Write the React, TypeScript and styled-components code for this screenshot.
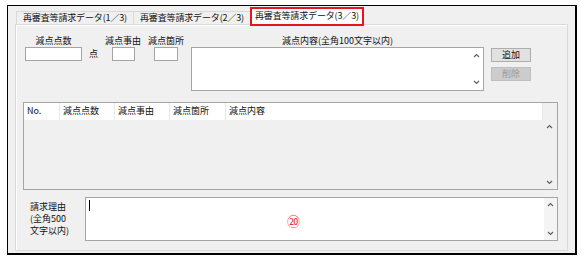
import styled, { createGlobalStyle } from "styled-components";

const GlobalStyle = createGlobalStyle`
html, body {
    margin: 0;
    background: #fff;
}
body {
    font-family: "Noto Sans CJK JP", "Noto Sans", sans-serif;
    font-size: 9px;
    color: #111;
}
`;

const Frame = styled.div`
box-sizing: border-box;
width: 570px;
height: 250px;
margin: 5px 0 0 7px;
padding: 1px 0 0 7px;
border: solid #000;
border-width: 1px 2px 2px 1px;
background: #f0f0f0;
`;

const TabStrip = styled.div`
display: flex;
align-items: flex-end;
height: 17px;
padding-left: 1px;
`;

const Tab = styled.div<{ $active?: boolean }>`
box-sizing: border-box;
height: ${p => (p.$active ? "19px" : "13px")};
margin-right: -1px;
margin-bottom: ${p => (p.$active ? "-2px" : "0")};
padding: 0 ${p => (p.$active ? "3px" : "6px")};
border: ${p => (p.$active ? "2px solid #e8141c" : "1px solid #d9d9d9")};
border-bottom: ${p => (p.$active ? "2px solid #e8141c" : "none")};
background: ${p => (p.$active ? "#fff" : "#f0f0f0")};
line-height: ${p => (p.$active ? "13px" : "12px")};
letter-spacing: -0.15px;
white-space: nowrap;
position: relative;
z-index: ${p => (p.$active ? 1 : 0)};
`;

const Panel = styled.div`
box-sizing: border-box;
width: 553px;
height: 227px;
padding: 9px 0 0 7px;
border: 1px solid #dadada;
box-shadow: inset 1px 1px 0 #fff;
background: #f0f0f0;
`;

const EntryRow = styled.div`
display: flex;
align-items: flex-start;
gap: 7px;
margin-left: 2px;
`;

const Field = styled.div`
display: flex;
flex-direction: column;
align-items: center;
`;

const FieldLabel = styled.div`
line-height: 13px;
height: 13px;
white-space: nowrap;
`;

const TextBox = styled.div<{ $w: number }>`
box-sizing: border-box;
width: ${p => p.$w}px;
height: 14px;
border: 1px solid #a5a5a5;
background: #fff;
`;

const Unit = styled.div`
margin-top: 14px;
line-height: 12px;
`;

const MemoBox = styled.div<{ $w: number }>`
box-sizing: border-box;
width: ${p => p.$w}px;
height: 44px;
border: 1px solid #a5a5a5;
background: #fff;
display: flex;
position: relative;
`;

const MemoText = styled.div`
flex: 1;
padding: 2px 3px;
`;

const Caret = styled.div`
width: 1px;
height: 11px;
background: #000;
`;

const ScrollBar = styled.div<{ $bg: string; $pad: number }>`
width: 13px;
display: flex;
flex-direction: column;
justify-content: space-between;
align-items: center;
padding: ${p => p.$pad}px 0;
background: ${p => p.$bg};
`;

const ButtonCol = styled.div`
display: flex;
flex-direction: column;
gap: 5px;
margin-top: 14px;
`;

const Button = styled.div<{ $disabled?: boolean }>`
box-sizing: border-box;
width: 40px;
height: 14px;
line-height: 12px;
text-align: center;
border: 1px solid ${p => (p.$disabled ? "#bfbfbf" : "#adadad")};
background: ${p => (p.$disabled ? "#cccccc" : "#e1e1e1")};
color: ${p => (p.$disabled ? "#9a9a9a" : "#111")};
`;

const List = styled.div`
box-sizing: border-box;
width: 535px;
height: 88px;
margin-top: 11px;
border: 1px solid #a5a5a5;
display: grid;
grid-template-columns: 1fr 14px;
grid-template-rows: 17px 1fr;
`;

const ListHeader = styled.div`
display: flex;
background: #fff;
`;

const HeadCell = styled.div<{ $w?: number }>`
box-sizing: border-box;
${p => (p.$w ? `width: ${p.$w}px;` : "flex: 1;")}
padding-left: 3px;
line-height: 16px;
border-right: 1px solid #e8e8e8;
white-space: nowrap;
`;

const ListBody = styled.div`
background: #f0f0f0;
`;

const Corner = styled.div`
background: #f0f0f0;
`;

const ReasonRow = styled.div`
display: flex;
align-items: center;
margin-top: 7px;
`;

const ReasonLabel = styled.div`
width: 62px;
padding-left: 7px;
box-sizing: border-box;
line-height: 12px;
white-space: nowrap;
`;

const Mark = styled.span`
position: absolute;
left: 201px;
top: 16px;
font-size: 13px;
line-height: 13px;
color: #e8383d;
`;

function Chevron({ up }: { up?: boolean }) {
    return (
        <svg width="7" height="5" viewBox="0 0 7 5">
            <polyline
                points={up ? "1,4 3.5,1.5 6,4" : "1,1 3.5,3.5 6,1"}
                fill="none"
                stroke="#606060"
                strokeWidth="1.2"
            />
        </svg>
    );
}

function App() {
    return (
        <>
            <GlobalStyle />
            <Frame>
                <TabStrip>
                    <Tab>再審査等請求データ(1／3)</Tab>
                    <Tab>再審査等請求データ(2／3)</Tab>
                    <Tab $active>再審査等請求データ(3／3)</Tab>
                </TabStrip>
                <Panel>
                    <EntryRow>
                        <Field>
                            <FieldLabel>減点点数</FieldLabel>
                            <TextBox $w={57} />
                        </Field>
                        <Unit>点</Unit>
                        <Field>
                            <FieldLabel>減点事由</FieldLabel>
                            <TextBox $w={23} />
                        </Field>
                        <Field>
                            <FieldLabel>減点箇所</FieldLabel>
                            <TextBox $w={24} />
                        </Field>
                        <Field>
                            <FieldLabel>減点内容(全角100文字以内)</FieldLabel>
                            <MemoBox $w={293}>
                                <MemoText />
                                <ScrollBar $bg="#fff" $pad={5}>
                                    <Chevron up />
                                    <Chevron />
                                </ScrollBar>
                            </MemoBox>
                        </Field>
                        <ButtonCol>
                            <Button>追加</Button>
                            <Button $disabled>削除</Button>
                        </ButtonCol>
                    </EntryRow>
                    <List>
                        <ListHeader>
                            <HeadCell $w={36}>No.</HeadCell>
                            <HeadCell $w={55}>減点点数</HeadCell>
                            <HeadCell $w={55}>減点事由</HeadCell>
                            <HeadCell $w={56}>減点箇所</HeadCell>
                            <HeadCell>減点内容</HeadCell>
                        </ListHeader>
                        <Corner />
                        <ListBody />
                        <ScrollBar $bg="#f0f0f0" $pad={4}>
                            <Chevron up />
                            <Chevron />
                        </ScrollBar>
                    </List>
                    <ReasonRow>
                        <ReasonLabel>
                            請求理由<br />
                            (全角500<br />
                            文字以内)
                        </ReasonLabel>
                        <MemoBox $w={473}>
                            <MemoText>
                                <Caret />
                            </MemoText>
                            <ScrollBar $bg="#f4f4f4" $pad={4}>
                                <Chevron up />
                                <Chevron />
                            </ScrollBar>
                            <Mark>⑳</Mark>
                        </MemoBox>
                    </ReasonRow>
                </Panel>
            </Frame>
        </>
    );
}

export default App;
